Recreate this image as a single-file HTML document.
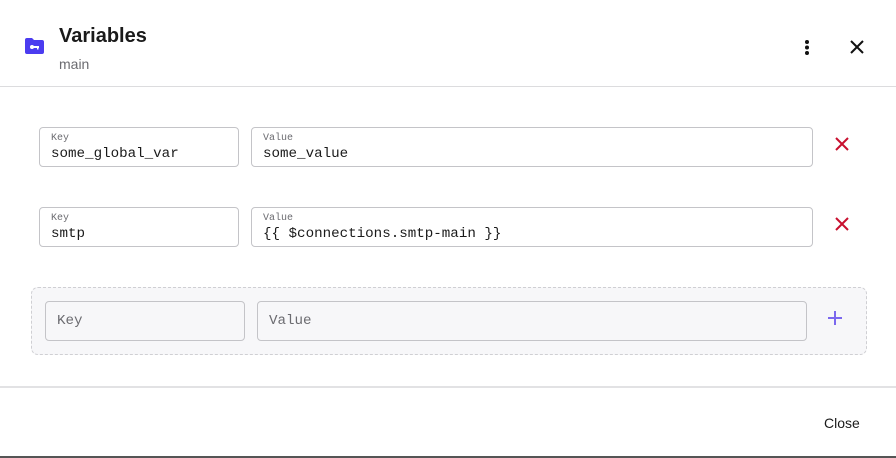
<!DOCTYPE html>
<html><head><style>
body{margin:0;width:896px;height:458px;background:#fff;font-family:"Liberation Sans",sans-serif;position:relative;overflow:hidden}
.abs{position:absolute}
.box{position:absolute;border:1px solid #c4c4c8;border-radius:4px;box-sizing:border-box;background:#fff}
.lbl{position:absolute;left:11px;top:5px;font:10px "Liberation Mono",monospace;color:#6b6b70}
.val{position:absolute;left:11px;top:18px;font:14.2px "Liberation Mono",monospace;color:#1a1a1a}
.ph{position:absolute;left:11px;top:11px;font:14.2px "Liberation Mono",monospace;color:#6b6b70}
</style></head><body>
<svg class="abs" style="left:24px;top:38px" width="21" height="17" viewBox="0 0 21 17"><path d="M1 2a2 2 0 0 1 2-2h5l2 2h8a2 2 0 0 1 2 2v10a2 2 0 0 1-2 2H3a2 2 0 0 1-2-2z" fill="#4b3cf0"/><circle cx="8" cy="9" r="2" fill="#fff"/><rect x="8" y="8" width="7" height="2" fill="#fff"/><rect x="13" y="9" width="1.5" height="2.5" fill="#fff"/></svg>
<div class="abs" style="left:59px;top:25px;font-size:20px;font-weight:bold;color:#1a1a1a">Variables</div>
<div class="abs" style="left:59px;top:56px;font-size:14px;color:#6b6b70">main</div>
<svg class="abs" style="left:803px;top:39px" width="8" height="17"><circle cx="4" cy="3" r="2" fill="#111"/><circle cx="4" cy="8.5" r="2" fill="#111"/><circle cx="4" cy="14" r="2" fill="#111"/></svg>
<svg class="abs" style="left:850px;top:40px" width="14" height="14"><path d="M1 1L13 13M13 1L1 13" stroke="#111" stroke-width="2"/></svg>
<div class="abs" style="left:0;top:86px;width:896px;height:1px;background:#dcdcde"></div>

<div class="box" style="left:39px;top:127px;width:200px;height:40px"><div class="lbl">Key</div><div class="val">some_global_var</div></div>
<div class="box" style="left:251px;top:127px;width:562px;height:40px"><div class="lbl">Value</div><div class="val">some_value</div></div>
<svg class="abs" style="left:835px;top:137px" width="14" height="14"><path d="M1 1L13 13M13 1L1 13" stroke="#c8102e" stroke-width="2"/></svg>

<div class="box" style="left:39px;top:207px;width:200px;height:40px"><div class="lbl">Key</div><div class="val">smtp</div></div>
<div class="box" style="left:251px;top:207px;width:562px;height:40px"><div class="lbl">Value</div><div class="val">{{ $connections.smtp-main }}</div></div>
<svg class="abs" style="left:835px;top:217px" width="14" height="14"><path d="M1 1L13 13M13 1L1 13" stroke="#c8102e" stroke-width="2"/></svg>

<div class="abs" style="left:31px;top:287px;width:836px;height:68px;box-sizing:border-box;border:1.5px dashed #cfcfd3;border-radius:7px;background:#f7f7f9"></div>
<div class="box" style="left:45px;top:301px;width:200px;height:40px;background:#f7f7f9"><div class="ph">Key</div></div>
<div class="box" style="left:257px;top:301px;width:550px;height:40px;background:#f7f7f9"><div class="ph">Value</div></div>
<svg class="abs" style="left:827px;top:310px" width="16" height="16"><path d="M8 1V15M1 8H15" stroke="#7b68ee" stroke-width="2"/></svg>

<div class="abs" style="left:0;top:386px;width:896px;height:2px;background:#e2e2e4"></div>
<div class="abs" style="left:824px;top:415px;font-size:14px;color:#1a1a1a">Close</div>
<div class="abs" style="left:0;top:456px;width:896px;height:2px;background:#555"></div>
</body></html>
